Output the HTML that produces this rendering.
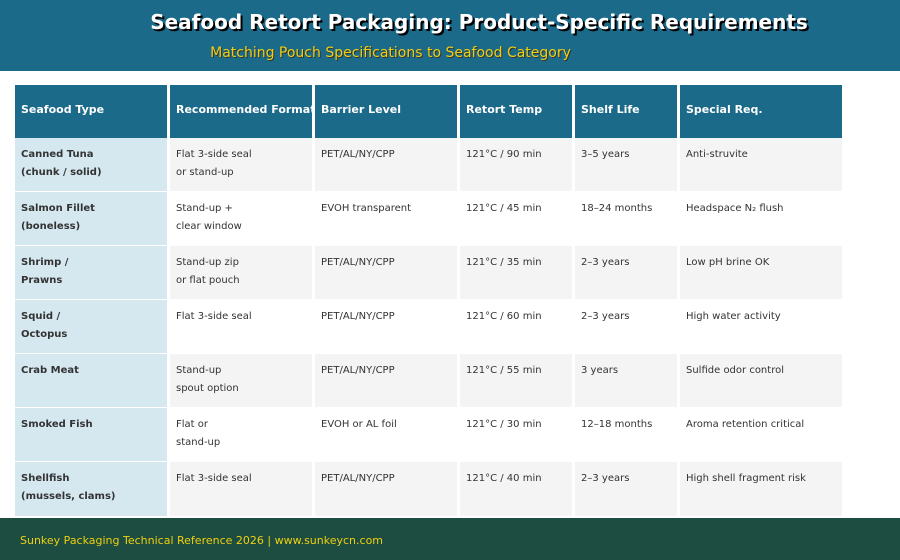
<!DOCTYPE html>
<html><head><meta charset="utf-8"><style>
*{margin:0;padding:0;box-sizing:border-box}
body{width:900px;height:560px;position:relative;background:#fff;font-family:"DejaVu Sans","Liberation Sans",sans-serif;overflow:hidden}
.hd{position:absolute;left:0;top:0;width:900px;height:71px;background:#1b6a89}
.t{position:absolute;left:0;width:958px;text-align:center;top:10px;color:#fff;font-weight:bold;font-size:20px;text-shadow:2px 2px 0 #000}
.s{position:absolute;left:0;width:781px;text-align:center;top:45px;color:#f0cf10;font-size:14px;text-shadow:1px 1px 0 #333}
.c{position:absolute;font-size:10px;color:#333;padding:8px 6px;line-height:18px;overflow:hidden;white-space:nowrap}
.h{background:#1b6a89;color:#fff;font-weight:bold;font-size:11px;display:flex;align-items:center;padding:0 6px 3px}
.f{font-weight:bold;background:#d5e8f0;color:#333}
.g{background:#f4f4f4}
.ft{position:absolute;left:0;top:518px;width:900px;height:42px;background:#1c4d40;color:#f0cf10;font-size:11px;padding:16px 20px}
</style></head><body>
<div class="hd"><div class="t">Seafood Retort Packaging: Product-Specific Requirements</div><div class="s">Matching Pouch Specifications to Seafood Category</div></div>
<div id="tb"></div>
<div class="ft">Sunkey Packaging Technical Reference 2026 | www.sunkeycn.com</div>
<script>
var cols=[[15,152],[170,142],[315,142],[460,112],[575,102],[680,162]];
var hdr=["Seafood Type","Recommended Format","Barrier Level","Retort Temp","Shelf Life","Special Req."];
var rows=[
["Canned Tuna<br>(chunk / solid)","Flat 3-side seal<br>or stand-up","PET/AL/NY/CPP","121°C / 90 min","3–5 years","Anti-struvite"],
["Salmon Fillet<br>(boneless)","Stand-up +<br>clear window","EVOH transparent","121°C / 45 min","18–24 months","Headspace N₂ flush"],
["Shrimp /<br>Prawns","Stand-up zip<br>or flat pouch","PET/AL/NY/CPP","121°C / 35 min","2–3 years","Low pH brine OK"],
["Squid /<br>Octopus","Flat 3-side seal","PET/AL/NY/CPP","121°C / 60 min","2–3 years","High water activity"],
["Crab Meat","Stand-up<br>spout option","PET/AL/NY/CPP","121°C / 55 min","3 years","Sulfide odor control"],
["Smoked Fish","Flat or<br>stand-up","EVOH or AL foil","121°C / 30 min","12–18 months","Aroma retention critical"],
["Shellfish<br>(mussels, clams)","Flat 3-side seal","PET/AL/NY/CPP","121°C / 40 min","2–3 years","High shell fragment risk"]];
var h="";
cols.forEach(function(c,i){h+='<div class="c h" style="left:'+c[0]+'px;top:85px;width:'+c[1]+'px;height:53px">'+hdr[i]+'</div>';});
rows.forEach(function(r,j){var y=138+j*54;r.forEach(function(v,i){var cl=i==0?"f":(j%2==0?"g":"");
h+='<div class="c '+cl+'" style="left:'+cols[i][0]+'px;top:'+y+'px;width:'+cols[i][1]+'px;height:'+(j==6?54:53)+'px">'+v+'</div>';});});
document.getElementById("tb").innerHTML=h;
</script>
</body></html>
